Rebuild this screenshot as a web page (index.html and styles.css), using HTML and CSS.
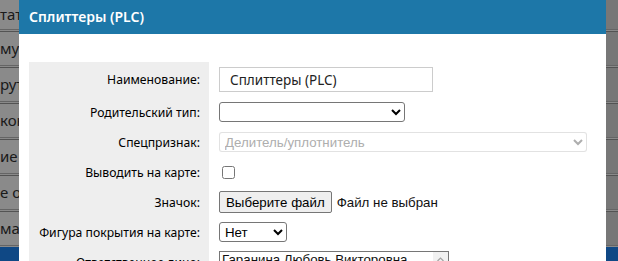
FILE: index.html
```html
<!DOCTYPE html>
<html lang="ru">
<head>
  <meta charset="UTF-8"/>
  <title>Сплиттеры (PLC)</title>
  <link rel="stylesheet" href="styles.css">
</head>
<body>
  <div class="page">
    <div class="page-row"><span>тат</span></div>
    <div class="page-row"><span>мус</span></div>
    <div class="page-row"><span>руть</span></div>
    <div class="page-row"><span>кон</span></div>
    <div class="page-row"><span>ие</span></div>
    <div class="page-row"><span>е о</span></div>
    <div class="page-row"><span>мар</span></div>
    <div class="page-footer"></div>
  </div>
  <div class="overlay"></div>

  <div class="dialog">
    <div class="dialog-title">Сплиттеры (PLC)</div>
    <div class="dialog-body">
      <div class="form">
        <div class="lbl">Наименование:</div>
        <div class="fld"><input type="text" class="txt" value="Сплиттеры (PLC)"/></div>

        <div class="lbl">Родительский тип:</div>
        <div class="fld"><select class="sel sel-parent"><option></option></select></div>

        <div class="lbl">Спецпризнак:</div>
        <div class="fld"><select class="sel sel-wide" disabled><option>Делитель/уплотнитель</option></select></div>

        <div class="lbl">Выводить на карте:</div>
        <div class="fld"><input type="checkbox" class="chk"/></div>

        <div class="lbl">Значок:</div>
        <div class="fld">
          <button class="file-btn">Выберите файл</button>
          <span class="file-name">Файл не выбран</span>
        </div>

        <div class="lbl">Фигура покрытия на карте:</div>
        <div class="fld"><select class="sel sel-short"><option>Нет</option></select></div>

        <div class="lbl">Ответственное лицо:</div>
        <div class="fld">
          <div class="listbox">
            <span>Гаранина Любовь Викторовна</span>
            <span class="scroll-up">
              <svg width="7" height="5" viewBox="0 0 7 5"><path d="M0.5 4 L3.5 1 L6.5 4" fill="none" stroke="#a3a3a3" stroke-width="1.2"/></svg>
            </span>
          </div>
        </div>
      </div>
    </div>
  </div>
</body>
</html>
```

FILE: styles.css
```css
body { margin: 0; font-family: 'Segoe UI', 'Noto Sans', sans-serif; background-color: #fff; color: #111; overflow: hidden; }

/* page behind the modal */
.page { width: 618px; }
.page-row {
  height: 33px;
  border-top: 1px solid #999;
  border-bottom: 1px solid #bbb;
  margin-bottom: 1px;
  background: linear-gradient(to right, #fff 0, #fff 600px, #dcdcdc 600px);
  font-size: 15px;
  line-height: 33px;
  color: #333;
}
.page-row:first-child { height: 29px; border-top: none; line-height: 29px; }
.page-row span { margin-left: 0; }
.page-footer { height: 20px; background-color: #1c86f5; }
.overlay { position: absolute; top: 0; left: 0; right: 0; bottom: 0; background: rgba(0, 0, 0, 0.46); }

/* modal */
.dialog {
  position: absolute;
  top: 0;
  left: 19px;
  width: 587px;
  height: 300px;
  background-color: #fff;
}
.dialog-title {
  background-color: #1d77a8;
  color: #fff;
  height: 34px;
  line-height: 33px;
  padding-left: 10px;
  font-size: 14px;
  font-weight: 600;
}
.dialog-body { padding: 28px 0 0 10px; }

.form {
  display: grid;
  grid-template-columns: 180px 1fr;
  column-gap: 10px;
}
.lbl {
  background-color: #eee;
  text-align: right;
  padding-right: 9px;
  font-size: 12.2px;
  color: #000;
  display: flex;
  align-items: center;
  justify-content: flex-end;
  min-height: 30px;
}
.lbl:first-child { min-height: 35px; }
.fld { display: flex; align-items: center; }

.txt {
  width: 214px;
  height: 25px;
  box-sizing: border-box;
  border: 1px solid #ccc;
  padding: 0 10px;
  font-family: 'Segoe UI', 'Noto Sans', sans-serif;
  font-size: 13.5px;
  color: #222;
  margin: 0;
}
.sel {
  height: 20px;
  box-sizing: border-box;
  font-family: 'Liberation Sans', Arial, sans-serif;
  font-size: 13.3px;
  color: #000;
  border: 1px solid #767676;
  border-radius: 3px;
  background-color: #fff;
  margin: 0;
  padding: 0 0 0 1px;
}
.sel-parent { width: 186px; }
.sel-wide { width: 368px; border-color: rgba(118, 118, 118, 0.3); color: #8c8c8c; }
.sel-short { width: 68px; }
.chk { width: 13px; height: 13px; margin: 0 0 0 3px; }

.file-btn {
  height: 22px;
  box-sizing: border-box;
  font-family: 'Liberation Sans', Arial, sans-serif;
  font-size: 13.3px;
  color: #000;
  background-color: #efefef;
  border: 1px solid #767676;
  border-radius: 2px;
  padding: 0 6px;
  margin: 0;
}
.file-name { font-family: 'Liberation Sans', Arial, sans-serif; font-size: 13.3px; margin-left: 5px; }

.listbox {
  width: 230px;
  height: 22px;
  box-sizing: border-box;
  border: 1px solid #767676;
  border-bottom: none;
  font-family: 'Liberation Sans', Arial, sans-serif;
  font-size: 13.3px;
  padding-left: 2px;
  display: flex;
  justify-content: space-between;
  align-items: flex-start;
  align-self: flex-start;
  margin-top: 4px;
  line-height: 15px;
}
.scroll-up { width: 15px; background-color: #f1f1f1; height: 21px; display: flex; justify-content: center; padding-top: 5px; box-sizing: border-box; }
```
